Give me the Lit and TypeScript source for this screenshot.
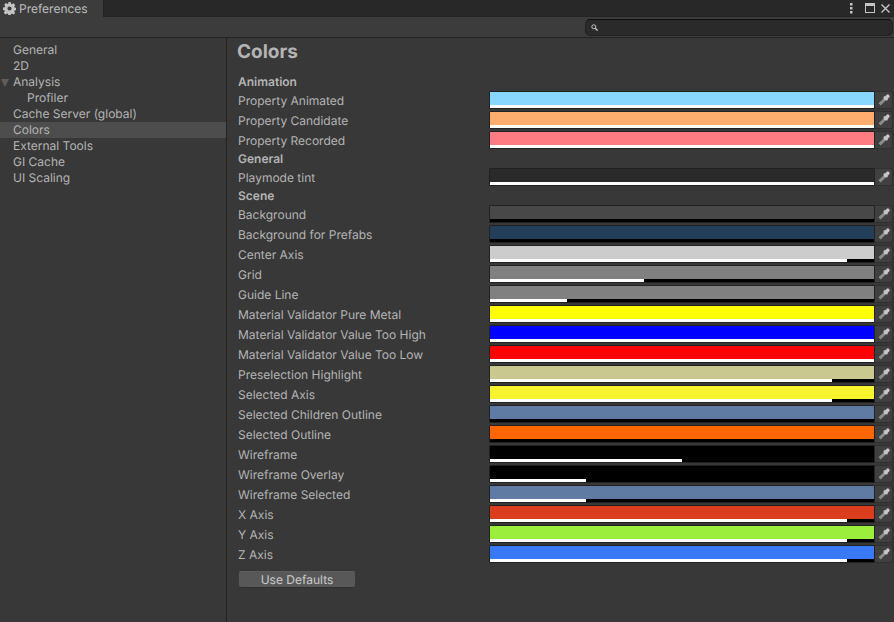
import { LitElement, html, css, svg } from "lit";
import { customElement } from "lit/decorators.js";

type Row = { label: string; color: string; alpha: number };
const R = (label: string, color: string, alpha = 100): Row => ({ label, color, alpha });

const sections: { title: string; rows: Row[] }[] = [
  { title: "Animation", rows: [
    R("Property Animated", "#87d7ff"),
    R("Property Candidate", "#ffad6e"),
    R("Property Recorded", "#ff7c82"),
  ]},
  { title: "General", rows: [R("Playmode tint", "#2a2a2a")] },
  { title: "Scene", rows: [
    R("Background", "#484848", 0),
    R("Background for Prefabs", "#223e59", 0),
    R("Center Axis", "#cccccc", 93),
    R("Grid", "#808080", 40),
    R("Guide Line", "#808080", 20),
    R("Material Validator Pure Metal", "#ffff00"),
    R("Material Validator Value Too High", "#0000ff"),
    R("Material Validator Value Too Low", "#ff0000"),
    R("Preselection Highlight", "#c9c98f", 89),
    R("Selected Axis", "#f7f32e", 89),
    R("Selected Children Outline", "#5f7ba3", 0),
    R("Selected Outline", "#ff6600", 0),
    R("Wireframe", "#000000", 50),
    R("Wireframe Overlay", "#000000", 25),
    R("Wireframe Selected", "#5f7ba3", 25),
    R("X Axis", "#db3e1d", 93),
    R("Y Axis", "#9bef3c", 93),
    R("Z Axis", "#3a79f6", 93),
  ]},
];

const nav = [
  { t: "General" }, { t: "2D" }, { t: "Analysis", arrow: true },
  { t: "Profiler", sub: true }, { t: "Cache Server (global)" },
  { t: "Colors", sel: true }, { t: "External Tools" }, { t: "GI Cache" }, { t: "UI Scaling" },
];

const dropper = svg`<svg class="dropper" width="12" height="12" viewBox="0 0 12 12">
  <path d="M1.6 10.4 L6.8 5.2" stroke="#8c8c8c" stroke-width="3" fill="none"/>
  <path d="M7.6 4.4 L9.8 2.2" stroke="#c6c6c6" stroke-width="3.6" stroke-linecap="round" fill="none"/>
  <path d="M5.8 2.6 L9.4 6.2" stroke="#c6c6c6" stroke-width="1.6" fill="none"/>
</svg>`;

@customElement("app-root")
export class AppRoot extends LitElement {
  static styles = css`
    :host { display: block; width: 894px; height: 622px; overflow: hidden; background: #383838;
      font-family: Inter, "Liberation Sans", sans-serif; font-size: 12px; color: #b4b4b4; text-rendering: geometricPrecision; }
    .titlebar { height: 16px; background: #282828; border-bottom: 1px solid #232323; display: flex; align-items: stretch; }
    .tab { width: 104px; height: 17px; background: #3c3c3c; border-right: 1px solid #232323; display: flex; align-items: center; gap: 3px; padding-left: 3px; box-sizing: border-box; color: #bcbcbc; }
    .spacer { flex: 1; }
    .winicons { display: flex; align-items: center; padding-right: 4px; }
    .kebab { margin-right: 12px; }
    .maxi { margin-right: 6px; }
    .toolbar { height: 20px; background: #3c3c3c; border-bottom: 1px solid #232323; display: flex; justify-content: flex-end; align-items: center; padding-right: 1px; }
    .search { width: 308px; height: 17px; box-sizing: border-box; background: #2a2a2a; border: 1px solid #212121; border-top-color: #0d0d0d; border-radius: 5px; display: flex; align-items: center; padding-left: 5px; }
    .main { display: flex; height: 584px; }
    .side { width: 227px; box-sizing: border-box; border-right: 1px solid #232323; padding-top: 4px; flex: none; }
    .nav { height: 16px; line-height: 16px; padding-left: 13px; position: relative; }
    .nav.sub { padding-left: 27px; }
    .nav.sel { background: #4d4d4d; }
    .tri { position: absolute; left: 1px; top: 5px; width: 0; height: 0; border-left: 4px solid transparent; border-right: 4px solid transparent; border-top: 8px solid #5e5e5e; }
    .content { flex: 1; padding: 3px 0 0 11px; min-width: 0; }
    h1 { margin: 0 0 10px -1px; font-size: 19px; line-height: 22px; font-weight: 700; color: #b4b4b4; }
    .head { font-weight: 600; height: 17px; line-height: 17px; }
    .row { height: 20px; display: flex; align-items: center; }
    .label { width: 251px; flex: none; }
    .field { display: flex; height: 18px; width: 404px; }
    .swatch { width: 385px; height: 18px; box-sizing: border-box; border: 1px solid #212121; border-right: none; border-radius: 2px 0 0 2px; display: flex; flex-direction: column; }
    .fill { flex: 1; }
    .alpha { height: 3px; background: #000; }
    .alpha div { height: 100%; background: #fff; }
    .pick { width: 19px; height: 18px; box-sizing: border-box; background: #404040; border: 1px solid #303030; border-left: 1px solid #232323; border-radius: 0 3px 3px 0; display: flex; align-items: center; justify-content: center; }
    .btn { margin-top: 7px; width: 118px; height: 17px; box-sizing: border-box; background: #585858; border: 1px solid #3a3a3a; border-top-color: #5e5e5e; border-bottom-color: #303030; border-radius: 3px; text-align: center; line-height: 15px; color: #cccccc; }
    svg { display: block; }
  `;

  render() {
    return html`
      <div class="titlebar">
        <div class="tab">
          <svg width="13" height="13" viewBox="0 0 13 13"><path fill="#c4c4c4" fill-rule="evenodd" d="M5.3 0h2.4l.3 1.8 1 .4 1.5-1 1.7 1.7-1 1.5.4 1 1.8.3v2.4l-1.8.3-.4 1 1 1.5-1.7 1.7-1.5-1-1 .4-.3 1.8H5.3L5 11.8l-1-.4-1.5 1-1.7-1.7 1-1.5-.4-1L0 7.9V5.5l1.8-.3.4-1-1-1.5L2.9 1l1.5 1 1-.4zM6.5 4.4a2.1 2.1 0 1 0 0 4.2 2.1 2.1 0 0 0 0-4.2z"/></svg>
          <span>Preferences</span>
        </div>
        <div class="spacer"></div>
        <div class="winicons">
          <svg class="kebab" width="3" height="11" viewBox="0 0 3 11"><g fill="#c4c4c4"><rect x="0" y="0" width="2.5" height="2.5"/><rect x="0" y="4" width="2.5" height="2.5"/><rect x="0" y="8" width="2.5" height="2.5"/></g></svg>
          <svg class="maxi" width="10" height="10" viewBox="0 0 10 10"><rect x=".5" y=".5" width="9" height="9" fill="none" stroke="#c4c4c4"/><rect x="0" y="0" width="10" height="3" fill="#c4c4c4"/></svg>
          <svg width="9" height="9" viewBox="0 0 9 9"><path d="M.5.5l8 8M8.5.5l-8 8" stroke="#c4c4c4" stroke-width="1.4"/></svg>
        </div>
      </div>
      <div class="toolbar">
        <div class="search">
          <svg width="7" height="7" viewBox="0 0 7 7"><circle cx="2.8" cy="2.8" r="2" fill="none" stroke="#c4c4c4"/><path d="M4.3 4.3L6.6 6.6" stroke="#c4c4c4" stroke-width="1.3"/></svg>
        </div>
      </div>
      <div class="main">
        <div class="side">
          ${nav.map(n => html`<div class="nav ${n.sub ? "sub" : ""} ${n.sel ? "sel" : ""}">${n.arrow ? html`<span class="tri"></span>` : ""}${n.t}</div>`)}
        </div>
        <div class="content">
          <h1>Colors</h1>
          ${sections.map(s => html`
            <div class="head">${s.title}</div>
            ${s.rows.map(r => html`
              <div class="row">
                <div class="label">${r.label}</div>
                <div class="field">
                  <div class="swatch">
                    <div class="fill" style="background:${r.color}"></div>
                    <div class="alpha"><div style="width:${r.alpha}%"></div></div>
                  </div>
                  <div class="pick">${dropper}</div>
                </div>
              </div>`)}
          `)}
          <div class="btn">Use Defaults</div>
        </div>
      </div>
    `;
  }
}
